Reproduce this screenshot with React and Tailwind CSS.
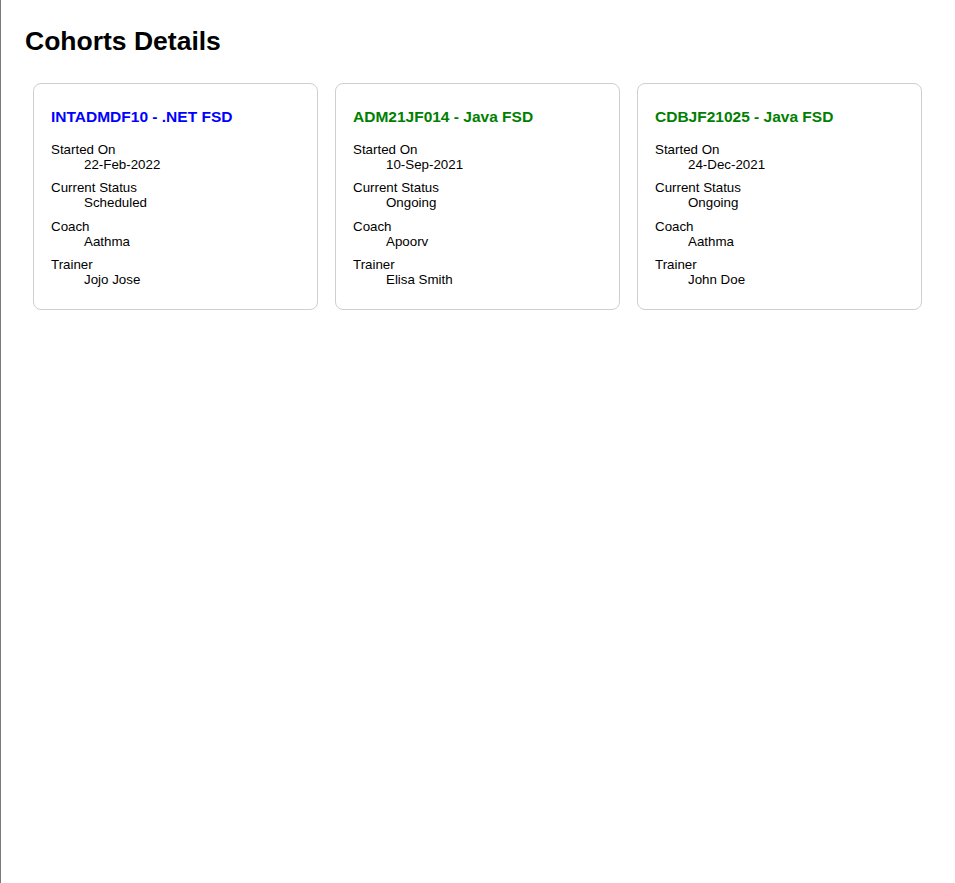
const cohorts = [
  { code: 'INTADMDF10', tech: '.NET FSD', started: '22-Feb-2022', status: 'Scheduled', coach: 'Aathma', trainer: 'Jojo Jose' },
  { code: 'ADM21JF014', tech: 'Java FSD', started: '10-Sep-2021', status: 'Ongoing', coach: 'Apoorv', trainer: 'Elisa Smith' },
  { code: 'CDBJF21025', tech: 'Java FSD', started: '24-Dec-2021', status: 'Ongoing', coach: 'Aathma', trainer: 'John Doe' },
]

function CohortCard({ cohort }) {
  const rows = [
    ['Started On', cohort.started],
    ['Current Status', cohort.status],
    ['Coach', cohort.coach],
    ['Trainer', cohort.trainer],
  ]
  return (
    <div className="border border-[#cfcfcf] rounded-[8px] px-[17px] pt-[24px] pb-[22px]">
      <h3 className={`text-[15.5px] leading-[18px] font-bold ${cohort.status === 'Scheduled' ? 'text-[#0000ff]' : 'text-[#008000]'}`}>
        {cohort.code} - {cohort.tech}
      </h3>
      <dl className="mt-[16px] flex flex-col gap-[8.25px] text-[13.33px] leading-[15px]">
        {rows.map(([label, value]) => (
          <div key={label}>
            <dt>{label}</dt>
            <dd className="ml-[33px]">{value}</dd>
          </div>
        ))}
      </dl>
    </div>
  )
}

export default function App() {
  return (
    <div className="min-h-[883px] border-l border-[#7a7a7a] bg-white text-black" style={{ fontFamily: '"Liberation Sans", Arial, sans-serif' }}>
      <h1 className="pl-[24px] pt-[26px] text-[26.5px] leading-[30px] font-bold">Cohorts Details</h1>
      <div className="grid grid-cols-3 gap-[17px] pl-[32px] pr-[33px] mt-[27px]">
        {cohorts.map((c) => (
          <CohortCard key={c.code} cohort={c} />
        ))}
      </div>
    </div>
  )
}
